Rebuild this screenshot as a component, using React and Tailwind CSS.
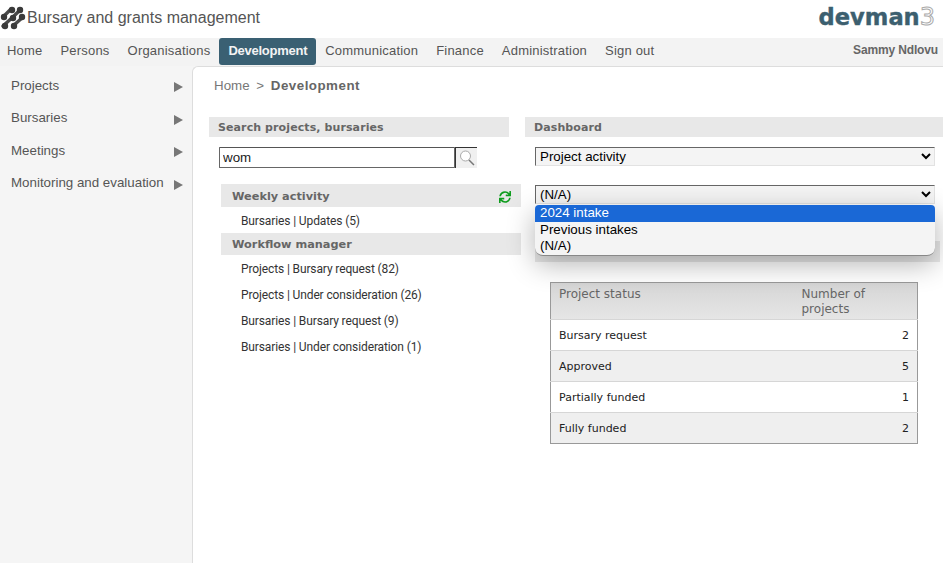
import { FaSync } from 'react-icons/fa';

const navItems = ['Home', 'Persons', 'Organisations', 'Development', 'Communication', 'Finance', 'Administration', 'Sign out'];
const sideItems = ['Projects', 'Bursaries', 'Meetings', 'Monitoring and evaluation'];
const workflow = ['Projects | Bursary request (82)', 'Projects | Under consideration (26)', 'Bursaries | Bursary request (9)', 'Bursaries | Under consideration (1)'];
const rows = [['Bursary request', 2], ['Approved', 5], ['Partially funded', 1], ['Fully funded', 2]];

function Logo() {
    return (
        <svg width="26" height="24" viewBox="0 0 26 24" className="shrink-0">
            <g stroke="#4a4a4a" strokeWidth="3.4" strokeLinecap="round" fill="none">
                <path d="M4 10 L11 3" />
                <path d="M3 20 L14 10 L21 3" />
                <path d="M13 20 L23 11" />
            </g>
            <g fill="#3a3a3a">
                <circle cx="4" cy="11" r="3.2" />
                <circle cx="12" cy="4" r="3.2" />
                <circle cx="20" cy="4" r="3.2" />
                <circle cx="13" cy="12" r="3.2" />
                <circle cx="22" cy="11" r="3.2" />
                <circle cx="5" cy="20" r="3.2" />
                <circle cx="14" cy="20" r="3.2" />
            </g>
        </svg>
    );
}

function SectionHead({ children, className }) {
    return (
        <div className={`h-5 bg-[#e8e8e8] pt-[1px] font-['DejaVu_Sans',sans-serif] text-[11px] leading-5 font-bold tracking-[0.1px] text-[#666] ${className}`}>
            {children}
        </div>
    );
}

export default function App() {
    return (
        <div className="h-[563px] w-[943px] overflow-hidden bg-white font-['Liberation_Sans',sans-serif]">
            {/* Header */}
            <div className="flex h-[38px] items-center justify-between">
                <div className="flex items-center gap-[1px] pb-[3px]">
                    <Logo />
                    <span className="text-[16px] text-[#555]">Bursary and grants management</span>
                </div>
                <div className="flex items-baseline pr-[8px] pb-[5px] font-['DejaVu_Sans',sans-serif] text-[22.6px] leading-none font-bold text-[#3c5f6f] [-webkit-text-stroke:0.4px_#3c5f6f]">
                    devman
                    <span className="text-[24px] font-normal text-white [-webkit-text-stroke:1px_#aaa]">3</span>
                </div>
            </div>

            {/* Nav */}
            <div className="flex h-7 bg-[#f3f3f3]">
                <div className="-ml-[2px] flex flex-1 text-[13px] text-[#555]">
                    {navItems.map((item) => (
                        <div
                            key={item}
                            className={item === 'Development'
                                ? 'h-[27px] rounded-[3px] bg-[#3a6073] px-[9px] leading-[25px] font-bold tracking-[-0.25px] text-[#f3f3f3]'
                                : 'px-[9px] leading-[25px] tracking-[0.2px]'}
                        >
                            {item}
                        </div>
                    ))}
                </div>
                <div className="pr-[5px] text-[12px] leading-[24px] font-bold tracking-[-0.15px] text-[#666]">Sammy Ndlovu</div>
            </div>

            <div className="flex h-[497px] bg-[#f5f5f5]">
                {/* Sidebar */}
                <div className="w-[192px] shrink-0 pt-[3.4px] pl-[11px] text-[13.33px] text-[#555]">
                    {sideItems.map((item) => (
                        <div key={item} className="flex h-[32.6px] items-center justify-between pr-[9px]">
                            <span className="text-[#555]">{item}</span>
                            <span className="mt-[3px] h-0 w-0 border-y-[5px] border-l-[9px] border-y-transparent border-l-[#777]" />
                        </div>
                    ))}
                </div>

                {/* Main */}
                <div className="relative flex-1 rounded-tl-[6px] border-t border-l border-[#ddd] bg-white pl-[16px]">
                    <div className="pt-[11px] pl-[5px] text-[13.33px] leading-[16px] text-[#777]">
                        Home <span className="mx-[3px]">&gt;</span> <span className="font-bold tracking-[0.5px] text-[#666]">Development</span>
                    </div>

                    <div className="mt-[23px] flex gap-[16px]">
                        {/* Left column */}
                        <div className="w-[300px] shrink-0">
                            <SectionHead className="px-[9px]">Search projects, bursaries</SectionHead>
                            <div className="mt-[10px] flex pl-[10px]">
                                <input
                                    readOnly
                                    value="wom"
                                    className="h-[21px] w-[236px] rounded-[1px] border border-[#666] border-t-[#555] px-[3px] text-[13.33px] text-[#222] outline-none"
                                />
                                <div className="flex h-[21px] w-[22px] items-center justify-center border-t border-l border-t-[#333] border-l-[#333] bg-[#f0f0f0]">
                                    <svg width="18" height="18" viewBox="0 0 18 18" fill="none">
                                        <circle cx="7.5" cy="7" r="5" stroke="#aaa" strokeWidth="1" fill="#fff" />
                                        <path d="M11 11 L16 16" stroke="#777" strokeWidth="1.5" />
                                    </svg>
                                </div>
                            </div>
                            <div className="mt-[16px] w-[300px] pl-[12px] font-['Roboto',sans-serif] text-[12px] tracking-[-0.12px] text-[#333]">
                                <div className="flex h-[23px] w-[300px] items-center justify-between bg-[#e8e8e8] pt-[3px] pr-[10px] pl-[11px] font-['DejaVu_Sans',sans-serif] text-[11.3px] font-bold tracking-normal text-[#666]">
                                    Weekly activity
                                    <FaSync size={12} color="#0f9d1e" />
                                </div>
                                <div className="h-[26px] pl-[20px] leading-[28px]">Bursaries | Updates (5)</div>
                                <div className="flex h-[22px] w-[300px] items-center bg-[#e8e8e8] pt-[2px] pl-[11px] font-['DejaVu_Sans',sans-serif] text-[11.3px] font-bold tracking-normal text-[#666]">
                                    Workflow manager
                                </div>
                                <div className="pt-[1px]">
                                    {workflow.map((item) => (
                                        <div key={item} className="h-[26px] pl-[20px] leading-[26px]">{item}</div>
                                    ))}
                                </div>
                            </div>
                        </div>

                        {/* Right column */}
                        <div className="flex-1">
                            <SectionHead className="px-[9px]">Dashboard</SectionHead>
                            <div className="pl-[10px]">
                                <select className="mt-[10px] block h-[19px] w-[400px] border border-[#e2e2e2] border-t-[#666] border-l-[#666] bg-[#f4f4f4] text-[13.33px] leading-[15px] text-black">
                                    <option>Project activity</option>
                                </select>
                                <select className="mt-[19px] block h-[19px] w-[400px] border border-[#e2e2e2] border-t-[#666] border-l-[#666] bg-[#f4f4f4] text-[13.33px] leading-[15px] text-black">
                                    <option>(N/A)</option>
                                </select>
                                <div className="mt-[37px] h-[21px] w-[405px] bg-[#e8e8e8]" />

                                {/* Project status table */}
                                <table className="mt-[20px] ml-[15px] w-[368px] border border-[#999] font-['DejaVu_Sans',sans-serif] text-[11px] text-[#222]">
                                    <thead>
                                        <tr className="h-[37px] bg-gradient-to-b from-[#d6d6d6] to-[#e6e6e6] align-top text-[12px] text-[#666]">
                                            <th className="px-[8px] pt-[4px] text-left leading-[15px] font-normal">Project status</th>
                                            <th className="w-[116px] pt-[4px] pr-[8px] text-left leading-[15px] font-normal">Number of projects</th>
                                        </tr>
                                    </thead>
                                    <tbody>
                                        {rows.map(([status, count], i) => (
                                            <tr key={status} className={`h-[31px] border-t border-[#d6d6d6] ${i % 2 ? 'bg-[#efefef]' : 'bg-white'}`}>
                                                <td className="px-[8px] pt-[2px]">{status}</td>
                                                <td className="pt-[2px] pr-[8px] text-right">{count}</td>
                                            </tr>
                                        ))}
                                    </tbody>
                                </table>
                            </div>
                        </div>
                    </div>

                    {/* Open select list */}
                    <div className="absolute top-[138px] left-[342px] w-[400px] overflow-hidden rounded-b-[8px] border-b border-[#888] bg-[#f4f4f4] text-[13.33px] leading-[16.5px] text-black shadow-[0_8px_28px_rgba(0,0,0,0.3)]">
                        <div className="rounded-t-[4px] bg-[#1a68d6] pl-[5px] text-white">2024 intake</div>
                        <div className="pl-[5px]">Previous intakes</div>
                        <div className="pl-[5px]">(N/A)</div>
                    </div>
                </div>
            </div>
        </div>
    );
}
